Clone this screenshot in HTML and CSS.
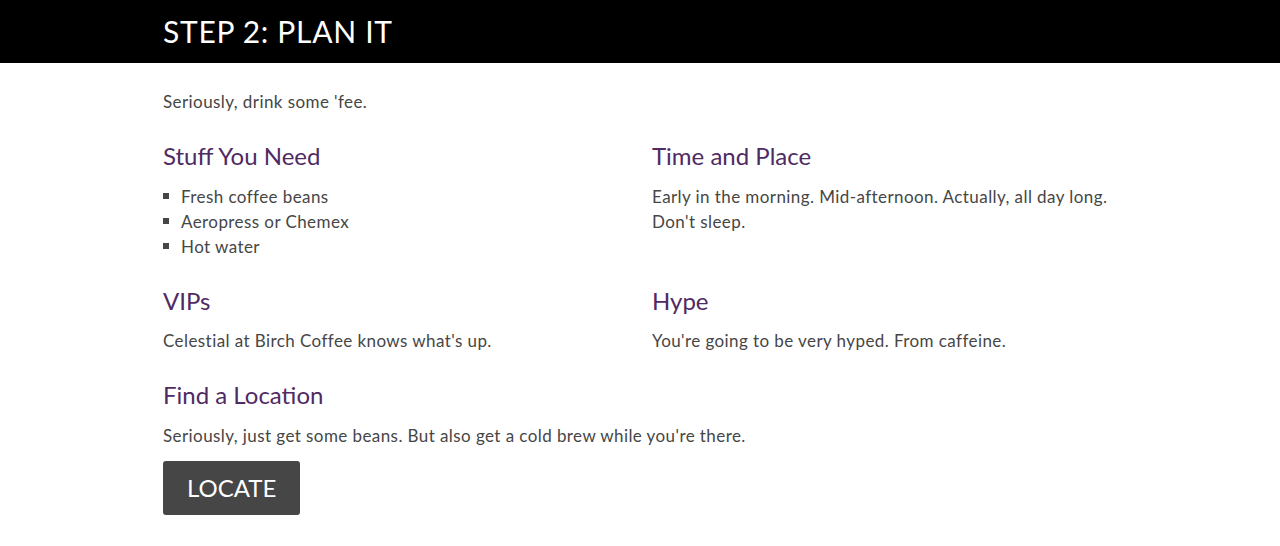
FILE: index.html
```html
<!DOCTYPE html>
<html>
<head>
<meta charset="utf-8">
<link rel="stylesheet" href="styles.css">
</head>
<body>
<header class="bar">
  <div class="container">
    <h1 class="title">STEP 2: PLAN IT</h1>
  </div>
</header>
<main class="container content">
  <p class="text intro">Seriously, drink some 'fee.</p>
  <div class="grid">
    <section class="block">
      <h2 class="heading">Stuff You Need</h2>
      <ul class="list">
        <li>Fresh coffee beans</li>
        <li>Aeropress or Chemex</li>
        <li>Hot water</li>
      </ul>
    </section>
    <section class="block">
      <h2 class="heading">Time and Place</h2>
      <p class="text">Early in the morning. Mid-afternoon. Actually, all day long. Don't sleep.</p>
    </section>
    <section class="block">
      <h2 class="heading">VIPs</h2>
      <p class="text">Celestial at Birch Coffee knows what's up.</p>
    </section>
    <section class="block">
      <h2 class="heading">Hype</h2>
      <p class="text">You're going to be very hyped. From caffeine.</p>
    </section>
  </div>
  <section class="block">
    <h2 class="heading">Find a Location</h2>
    <p class="text">Seriously, just get some beans. But also get a cold brew while you're there.</p>
    <a class="button" href="#">LOCATE</a>
  </section>
</main>
</body>
</html>
```

FILE: styles.css
```css
html, body {
  margin: 0;
  padding: 0;
  background: #fff;
}
body {
  font-family: "Lato", "Noto Sans", sans-serif;
  color: #464646;
}
.container {
  width: 954px;
  margin: 0 auto;
}
.bar {
  background: #000;
  height: 63px;
}
.title {
  margin: 0;
  color: #fff;
  font-weight: 400;
  font-size: 30px;
  line-height: 62px;
  letter-spacing: 0.7px;
}
.content {
  padding-top: 26px;
}
.text {
  margin: 0;
  font-size: 17px;
  line-height: 25px;
  letter-spacing: 0.42px;
}
.intro {
  margin-bottom: 27px;
}
.grid {
  display: grid;
  grid-template-columns: 465px 465px;
  column-gap: 24px;
  row-gap: 27px;
  margin-bottom: 27px;
}
.heading {
  margin: 0 0 12.5px;
  font-weight: 400;
  font-size: 24px;
  line-height: 30px;
  color: #4f2a63;
}
.list {
  list-style: none;
  margin: 0;
  padding: 0;
  font-size: 17px;
  line-height: 25px;
  letter-spacing: 0.42px;
}
.list li {
  display: flex;
  align-items: center;
}
.list li::before {
  content: "";
  width: 6px;
  height: 6px;
  background: #464646;
  margin-right: 12px;
}
.button {
  display: inline-block;
  margin-top: 13.5px;
  background: #464646;
  color: #fff;
  text-decoration: none;
  font-size: 24px;
  line-height: 54px;
  height: 54px;
  padding: 0 24px;
  border-radius: 3px;
}
```
